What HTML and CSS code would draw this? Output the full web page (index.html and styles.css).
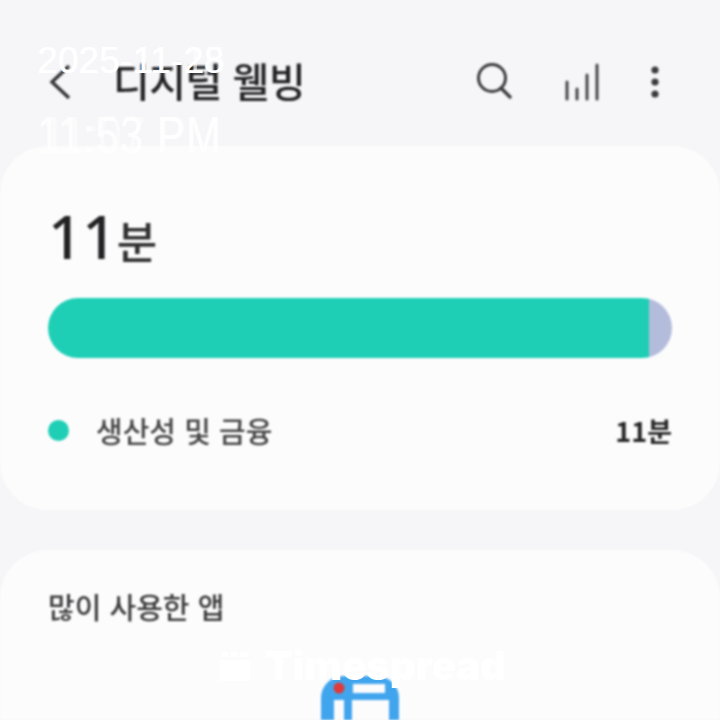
FILE: index.html
```html
<!DOCTYPE html>
<html lang="ko">
<head>
    <meta charset="UTF-8">
    <title>디지털 웰빙</title>
    <link rel="stylesheet" href="styles.css">
</head>
<body>
    <div class="screen">
        <header class="topbar">
            <svg class="back" width="24" height="36" viewBox="0 0 24 36">
                <path d="M21 2 L4 18 L21 34" fill="none" stroke="#323234" stroke-width="3.4"/>
            </svg>
            <h1 class="title">디지털 웰빙</h1>
            <svg class="icon-search" width="38" height="38" viewBox="0 0 38 38">
                <circle cx="16" cy="15" r="13.5" fill="none" stroke="#3c3c3e" stroke-width="3"/>
                <path d="M25 25 L34 34" stroke="#3c3c3e" stroke-width="3.4" stroke-linecap="round"/>
            </svg>
            <svg class="icon-bars" width="36" height="38" viewBox="0 0 36 38">
                <path d="M3 19 V36 M13 26 V36 M23 12 V36 M33 2 V36" stroke="#464648" stroke-width="3" stroke-linecap="round"/>
            </svg>
            <svg class="icon-more" width="10" height="34" viewBox="0 0 10 34">
                <circle cx="5" cy="5" r="3.6" fill="#3a3a3c"/>
                <circle cx="5" cy="17" r="3.6" fill="#3a3a3c"/>
                <circle cx="5" cy="29" r="3.6" fill="#3a3a3c"/>
            </svg>
        </header>

        <section class="card summary">
            <div class="total">11<span class="unit">분</span></div>
            <div class="bar">
                <div class="bar-main"></div>
                <div class="bar-rest"></div>
            </div>
            <div class="legend">
                <span class="dot"></span>
                <span class="legend-name">생산성 및 금융</span>
                <span class="legend-time">11분</span>
            </div>
        </section>

        <section class="card apps">
            <h2 class="apps-title">많이 사용한 앱</h2>
            <svg class="app-icon" width="80" height="44" viewBox="0 0 80 44">
                <rect x="1" y="0" width="78" height="84" rx="22" fill="#41a5ee"/>
                <rect x="33" y="8" width="32" height="9" fill="#fcfcfc"/>
                <rect x="14" y="24" width="10" height="30" fill="#fcfcfc"/>
                <rect x="32" y="24" width="37" height="30" fill="#fcfcfc"/>
                <circle cx="19" cy="12" r="5.5" fill="#e03a3a"/>
            </svg>
        </section>
    </div>

    <div class="stamp stamp-date">2025-11-28</div>
    <div class="stamp stamp-date stamp-faint">2025-11-15</div>
    <div class="stamp stamp-time">11:53 PM</div>
    <div class="stamp stamp-time stamp-faint">11:07 PM</div>

    <div class="mark">
        <svg width="32" height="32" viewBox="0 0 32 32">
            <path d="M3 2 H9 V7 H3 Z M12 2 H18 V7 H12 Z M21 2 H30 V7 H21 Z M1 10 H31 V31 H1 Z" fill="#ffffff"/>
        </svg>
        <span>Timespread</span>
    </div>
</body>
</html>
```

FILE: styles.css
```css
html, body {
    margin: 0;
    padding: 0;
}
body {
    width: 720px;
    height: 720px;
    overflow: hidden;
    position: relative;
    background-color: #f6f6f8;
    font-family: "Noto Sans CJK KR", "Noto Sans", sans-serif;
}
.screen {
    filter: blur(0.9px);
}
.topbar {
    height: 146px;
    box-sizing: border-box;
    padding: 18px 60px 0 48px;
    display: flex;
    align-items: center;
}
.title {
    margin: -4px 0 0 41px;
    font-size: 40px;
    font-weight: 500;
    color: #222224;
    flex: 1;
    letter-spacing: -0.5px;
}
.icon-bars {
    margin-left: 50px;
}
.icon-more {
    margin-left: 50px;
}
.card {
    background-color: #fcfcfc;
    border-radius: 48px;
}
.summary {
    height: 364px;
    box-sizing: border-box;
    padding: 52px 48px 0;
    margin-bottom: 40px;
}
.total {
    font-family: "Noto Sans", sans-serif;
    font-size: 60px;
    font-weight: 500;
    line-height: 76px;
    color: #222224;
}
.unit {
    font-family: "Noto Sans CJK KR", sans-serif;
    font-size: 44px;
    font-weight: 500;
    color: #303032;
}
.bar {
    display: flex;
    height: 60px;
    margin-top: 20px;
    border-radius: 30px;
    overflow: hidden;
}
.bar-main {
    flex: 1;
    background-color: #1ecfb6;
}
.bar-rest {
    width: 23px;
    background-color: #b3bcdb;
}
.legend {
    display: flex;
    align-items: center;
    margin-top: 50px;
    height: 44px;
}
.dot {
    width: 21px;
    height: 21px;
    border-radius: 50%;
    background-color: #1ecfb6;
}
.legend-name {
    margin-left: 27px;
    font-size: 29px;
    font-weight: 500;
    color: #454547;
    flex: 1;
}
.legend-time {
    font-size: 27px;
    font-weight: 700;
    color: #262628;
}
.apps {
    height: 170px;
    border-radius: 48px 48px 0 0;
    box-sizing: border-box;
    padding: 35px 48px 0;
    overflow: hidden;
}
.apps-title {
    margin: 0;
    font-size: 29px;
    line-height: 42px;
    font-weight: 500;
    color: #3c3c3e;
}
/* the icon is cut off by the bottom of the window */
.app-icon {
    display: block;
    margin: 49px auto 0;
}
.stamp {
    position: absolute;
    left: 37px;
    color: #ffffff;
    font-family: "Liberation Sans", sans-serif;
    white-space: nowrap;
    transform-origin: left top;
}
.stamp-date {
    top: 41px;
    font-size: 37px;
    line-height: 40px;
    letter-spacing: 0.1px;
}
.stamp-date.stamp-faint {
    left: 38px;
    opacity: 0.6;
}
.stamp-time {
    top: 108px;
    font-size: 42px;
    line-height: 44px;
    letter-spacing: 1px;
    transform: scaleY(1.25);
    opacity: 0.85;
}
.stamp-time.stamp-faint {
    left: 42px;
    letter-spacing: 0.4px;
    opacity: 0.5;
}
.mark {
    position: absolute;
    left: 219px;
    top: 648px;
    display: flex;
    align-items: center;
    gap: 14px;
    color: #ffffff;
    font-family: "Inter", sans-serif;
    font-size: 40px;
    font-weight: 900;
    line-height: 36px;
}
```
